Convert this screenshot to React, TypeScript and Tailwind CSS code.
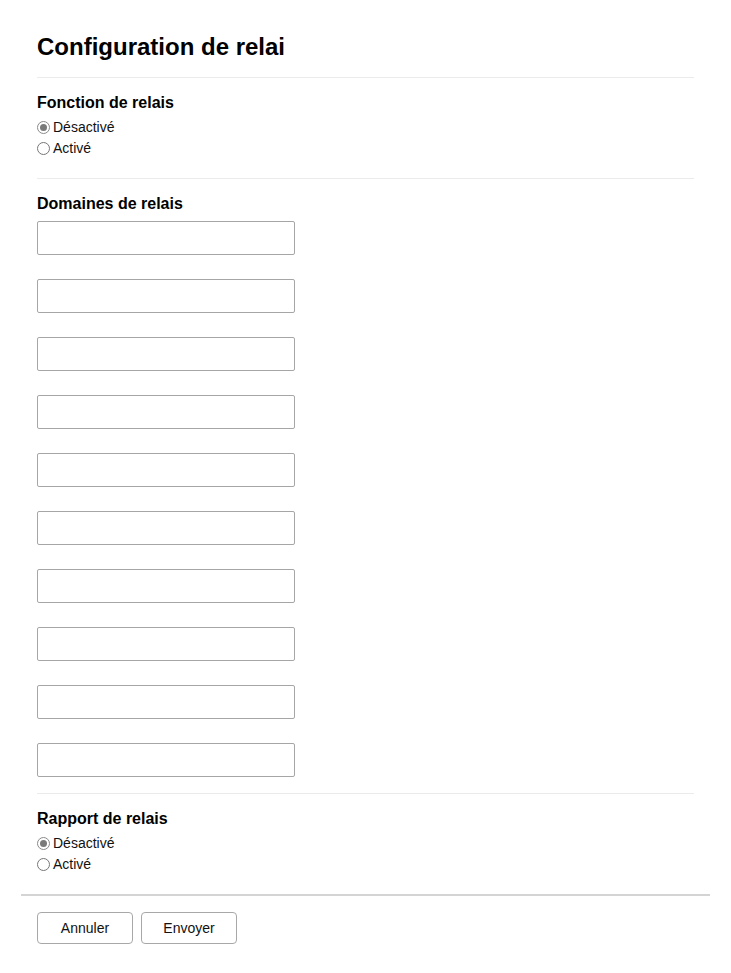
import { useState } from "react";

const FONT = "font-['Liberation_Sans',Arial,sans-serif]";

function Radio({
  label,
  checked,
  onSelect,
}: {
  label: string;
  checked: boolean;
  onSelect: () => void;
}) {
  return (
    <label
      className="flex h-[21px] cursor-pointer items-center text-[14px] text-[#111]"
      onClick={onSelect}
    >
      <span
        className={`flex h-[13px] w-[13px] items-center justify-center rounded-full border ${
          checked ? "border-[#8a8a8a]" : "border-[#767676]"
        } bg-white`}
      >
        {checked && <span className="h-[7px] w-[7px] rounded-full bg-[#7a7a7a]" />}
      </span>
      <span className="ml-[3px]">{label}</span>
    </label>
  );
}

function RadioGroup({ title }: { title: string }) {
  const [value, setValue] = useState<"off" | "on">("off");
  return (
    <div>
      <h2 className="text-[16px] font-bold leading-[20px] text-black">{title}</h2>
      <div className="mt-[4px]">
        <Radio label="Désactivé" checked={value === "off"} onSelect={() => setValue("off")} />
        <Radio label="Activé" checked={value === "on"} onSelect={() => setValue("on")} />
      </div>
    </div>
  );
}

export default function App() {
  const [domains, setDomains] = useState<string[]>(Array(10).fill(""));

  return (
    <div className={`${FONT} min-h-[973px] bg-white px-[21px]`}>
      <div className="px-4">
        <h1 className="pt-[33px] text-[24px] font-bold leading-[28px] text-black">
          Configuration de relai
        </h1>

        <div className="mt-4 border-t border-[#ebebeb] pt-[15px] pb-[19px]">
          <RadioGroup title="Fonction de relais" />
        </div>

        <div className="border-t border-[#ebebeb] pt-[15px] pb-4">
          <h2 className="text-[16px] font-bold leading-[20px] text-black">Domaines de relais</h2>
          <div className="mt-[7px] flex flex-col gap-6">
            {domains.map((d, i) => (
              <input
                key={i}
                type="text"
                value={d}
                onChange={(e) =>
                  setDomains((prev) => prev.map((v, j) => (j === i ? e.target.value : v)))
                }
                className="h-[34px] w-[258px] rounded-[2px] border border-[#a6a6a6] bg-white px-2 text-[14px] outline-none"
              />
            ))}
          </div>
        </div>

        <div className="border-t border-[#ebebeb] pt-[15px] pb-[19px]">
          <RadioGroup title="Rapport de relais" />
        </div>
      </div>

      <div className="border-t-2 border-[#d4d4d4] px-4 pt-[16px]">
        <div className="flex gap-2">
          <button className="h-[32px] w-[96px] rounded-[4px] border border-[#a8a8a8] bg-white text-[14px] text-[#111]">
            Annuler
          </button>
          <button className="h-[32px] w-[96px] rounded-[4px] border border-[#a8a8a8] bg-white text-[14px] text-[#111]">
            Envoyer
          </button>
        </div>
      </div>
    </div>
  );
}
